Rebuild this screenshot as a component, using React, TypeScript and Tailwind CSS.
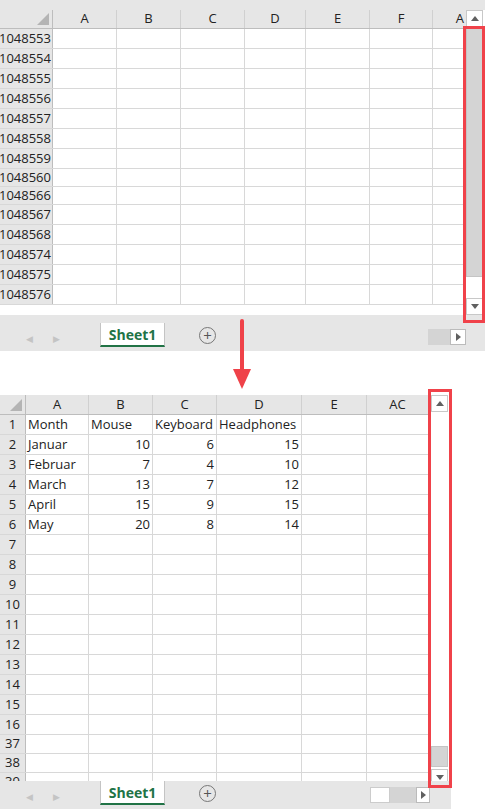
const font = { fontFamily: '"Segoe UI", "Open Sans", "Liberation Sans", sans-serif' };

function Corner({ w }: { w: number }) {
  return (
    <div className="relative h-full border-r border-[#bdbdbd] bg-[#e6e6e6]" style={{ width: w }}>
      <svg className="absolute right-[3px] bottom-[3px]" width="12" height="12" viewBox="0 0 12 12">
        <polygon points="12,0 12,12 0,12" fill="#b4b4b4" />
      </svg>
    </div>
  );
}

function Scrollbar({ height, thumbTop, thumbH }: { height: number; thumbTop: number; thumbH: number }) {
  return (
    <div className="relative w-[17px] bg-[#e6e6e6] flex flex-col" style={{ height }}>
      <div className="h-[17px] bg-white border border-[#c8c8c8] flex items-center justify-center">
        <svg width="8" height="5"><polygon points="4,0 8,5 0,5" fill="#606060" /></svg>
      </div>
      <div className="flex-1 relative bg-white">
        <div className="absolute left-0 right-0 bg-[#d4d4d4] border border-[#c4c4c4]" style={{ top: thumbTop, height: thumbH }} />
      </div>
      <div className="h-[17px] bg-white border border-[#c8c8c8] flex items-center justify-center">
        <svg width="8" height="5"><polygon points="0,0 8,0 4,5" fill="#606060" /></svg>
      </div>
    </div>
  );
}

function TabBar() {
  return (
    <div className="h-[28px] bg-[#e6e6e6] flex items-start relative">
      <div className="flex items-center gap-[20px] pl-[26px] pt-[9px] text-[#c4c4c4] text-[9px]">
        <span>◀</span><span>▶</span>
      </div>
      <div className="ml-[40px] w-[65px] h-[24px] bg-white border-x border-[#c4c4c4] border-b-2 border-b-[#217346] flex items-center justify-center text-[#217346] font-bold text-[14px]">
        Sheet1
      </div>
      <div className="ml-[34px] mt-[4px] w-[17px] h-[17px] rounded-full border border-[#777] flex items-center justify-center text-[#555] text-[15px] leading-none">+</div>
    </div>
  );
}

const topRows = ['1048553', '1048554', '1048555', '1048556', '1048557', '1048558', '1048559', '1048560', '1048566', '1048567', '1048568', '1048574', '1048575', '1048576'];
const topHeights = [20, 20, 20, 20, 20, 20, 20, 18, 18, 20, 20, 20, 20, 20];
const topCols: [string, number][] = [['A', 64], ['B', 64], ['C', 64], ['D', 61], ['E', 64], ['F', 63], ['A', 33]];

const botCols: [string, number][] = [['A', 63], ['B', 64], ['C', 64], ['D', 85], ['E', 65], ['AC', 62]];
const data: (string | number)[][] = [
  ['Month', 'Mouse', 'Keyboard', 'Headphones'],
  ['Januar', 10, 6, 15],
  ['Februar', 7, 4, 10],
  ['March', 13, 7, 12],
  ['April', 15, 9, 15],
  ['May', 20, 8, 14],
];
const botRows = ['1','2','3','4','5','6','7','8','9','10','11','12','13','14','15','16','37','38','39'];

export default function App() {
  return (
    <div className="w-[485px] h-[809px] bg-white overflow-hidden relative text-[13px] text-[#222]" style={font}>
      {/* top sheet */}
      <div className="bg-[#e6e6e6] h-[10px]" />
      <div className="flex">
        <div className="w-[466px]">
          <div className="flex h-[19px] bg-[#e6e6e6] border-b border-[#bdbdbd]">
            <Corner w={53} />
            {topCols.map(([c, w], i) => (
              <div key={i} className={`border-r border-[#d0d0d0] flex items-center ${i === 6 ? 'justify-end pr-[2px] border-r-0' : 'justify-center'}`} style={{ width: w }}>{c}</div>
            ))}
          </div>
          {topRows.map((r, i) => (
            <div key={r} className="flex border-b border-[#d8d8d8]" style={{ height: topHeights[i] }}>
              <div className="w-[53px] bg-[#e6e6e6] border-r border-[#bdbdbd] flex items-center justify-end pr-[1px] overflow-hidden">{r}</div>
              {topCols.map(([, w], j) => <div key={j} className="border-r border-[#d8d8d8]" style={{ width: w }} />)}
            </div>
          ))}
        </div>
        <Scrollbar height={305} thumbTop={0} thumbH={250} />
      </div>
      <div className="h-[8px] bg-[#e6e6e6]" />
      <div className="relative">
        <TabBar />
        <div className="absolute top-[6px] left-[428px] w-[34px] h-[16px] bg-[#d4d4d4]" />
        <div className="absolute top-[6px] left-[450px] w-[16px] h-[16px] bg-white border border-[#bbb] flex items-center justify-center">
          <svg width="5" height="8"><polygon points="0,0 5,4 0,8" fill="#606060" /></svg>
        </div>
      </div>
      <div className="h-[44px]" />

      {/* bottom sheet */}
      <div className="flex">
        <div className="w-[431px]">
          <div className="flex h-[20px] bg-[#e6e6e6] border-b border-[#bdbdbd]">
            <Corner w={26} />
            {botCols.map(([c, w], i) => (
              <div key={i} className="border-r border-[#d0d0d0] flex items-center justify-center" style={{ width: w }}>{c}</div>
            ))}
          </div>
          {botRows.map((r, i) => (
            <div key={r} className="flex border-b border-[#d8d8d8]" style={{ height: i >= 16 ? 19 : 20 }}>
              <div className="w-[26px] bg-[#e6e6e6] border-r border-[#bdbdbd] flex items-center justify-center">{r}</div>
              {botCols.map(([, w], j) => {
                const v = data[i]?.[j];
                return (
                  <div key={j} className={`border-r border-[#d8d8d8] flex items-center px-[2px] whitespace-nowrap ${typeof v === 'number' ? 'justify-end' : ''}`} style={{ width: w }}>{v ?? ''}</div>
                );
              })}
            </div>
          ))}
        </div>
        <div className="bg-[#e6e6e6]">
          <Scrollbar height={391} thumbTop={334} thumbH={21} />
        </div>
      </div>
      <div className="absolute left-0 top-[781px] w-[451px]">
        <TabBar />
        <div className="absolute top-[6px] left-[370px] w-[20px] h-[16px] bg-white border border-[#ccc]" />
        <div className="absolute top-[6px] left-[390px] w-[26px] h-[16px] bg-[#d4d4d4]" />
        <div className="absolute top-[6px] left-[416px] w-[14px] h-[16px] bg-white border border-[#bbb] flex items-center justify-center">
          <svg width="5" height="8"><polygon points="0,0 5,4 0,8" fill="#606060" /></svg>
        </div>
      </div>
      <div className="absolute left-[451px] top-[781px] w-[34px] h-[28px] bg-white" />

      {/* red highlights */}
      <div className="absolute left-[463px] top-[26px] w-[22px] h-[297px] border-[3px] border-[#f0424a]" />
      <div className="absolute left-[428px] top-[389px] w-[24px] h-[399px] border-[3px] border-[#f0424a]" />
      {/* arrow */}
      <svg className="absolute left-[232px] top-[319px]" width="20" height="72" viewBox="0 0 20 72">
        <line x1="10" y1="2" x2="10" y2="55" stroke="#ef4249" strokeWidth="4" strokeLinecap="round" />
        <polygon points="1,50 19,50 10,70" fill="#ef4249" />
      </svg>
    </div>
  );
}
